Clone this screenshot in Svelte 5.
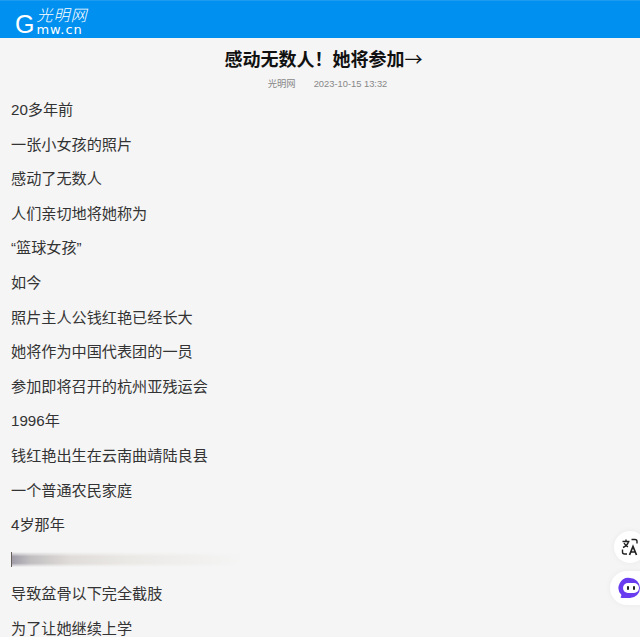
<script lang="ts">
  const lines = [
    "20多年前",
    "一张小女孩的照片",
    "感动了无数人",
    "人们亲切地将她称为",
    "“篮球女孩”",
    "如今",
    "照片主人公钱红艳已经长大",
    "她将作为中国代表团的一员",
    "参加即将召开的杭州亚残运会",
    "1996年",
    "钱红艳出生在云南曲靖陆良县",
    "一个普通农民家庭",
    "4岁那年",
  ];
  const after = ["导致盆骨以下完全截肢", "为了让她继续上学"];
</script>

<div class="page">
  <header class="topbar">
    <div class="logo" aria-label="光明网 gmw.cn">
      <span class="logo-g">G</span>
      <div class="logo-stack">
        <span class="logo-cn">光明网</span>
        <span class="logo-en">mw.cn</span>
      </div>
    </div>
  </header>

  <h1 class="title">感动无数人&#xFF01;她将参加<span class="arrow">→</span></h1>
  <div class="meta">
    <span>光明网</span>
    <span>2023-10-15 13:32</span>
  </div>

  <article class="content">
    {#each lines as line}
      <p>{line}</p>
    {/each}
    <div class="blurred"></div>
    {#each after as line}
      <p>{line}</p>
    {/each}
  </article>

  <button class="float translate" type="button" aria-label="翻译">
    <svg width="18" height="18" viewBox="0 0 18 18" fill="none" stroke="#222" stroke-width="1.4">
      <path d="M1.5 3.500h7M5 1.500v2M7.500 3.500c-.6 2.600-2.400 4.600-5.500 6M3 5c.9 1.700 2.300 3 4 3.800" />
      <path d="M10.500 1.500h3.500a2 2 0 0 1 2 2v2M1.500 11.500v2.500a2 2 0 0 0 2 2h2.500" />
      <path d="M8.500 17l3.500-8.500 3.500 8.500M9.700 14h4.600" stroke-width="1.700" />
    </svg>
  </button>
  <button class="float assistant" type="button" aria-label="助手">
    <svg width="24" height="24" viewBox="0 0 24 24">
      <path d="M12 2a10 10 0 0 1 10 10 10 10 0 0 1-10 10H4l-1.500-.5L3.500 19A10 10 0 0 1 12 2z" fill="#6a3cf0" />
      <rect x="5" y="7" width="16" height="10" rx="5" fill="#fff" />
      <rect x="9" y="10" width="2" height="4" rx="1" fill="#222" />
      <rect x="15" y="10" width="2" height="4" rx="1" fill="#222" />
    </svg>
  </button>
</div>

<style>
  :global(html),
  :global(body) {
    margin: 0;
    background: #f5f5f5;
    overflow: hidden;
  }
  .page {
    position: relative;
    height: 637px;
    overflow: hidden;
    background: #f5f5f5;
    font-family: "Liberation Sans", "Noto Sans CJK SC", sans-serif;
    color: #333;
  }
  .topbar {
    height: 37px;
    margin-top: 1px;
    background: #0090f0;
    display: flex;
    align-items: flex-end;
    padding-left: 15px;
    box-sizing: border-box;
    box-shadow: 0 -1px 0 #1c9bf0;
  }
  .logo {
    display: flex;
    align-items: flex-end;
    color: #fff;
  }
  .logo-g {
    font-size: 25px;
    line-height: 26px;
    margin-right: 2px;
    margin-bottom: 1px;
  }
  .logo-stack {
    display: flex;
    flex-direction: column;
    margin-bottom: 3px;
  }
  .logo-cn {
    font-family: "Noto Sans CJK SC", sans-serif;
    font-size: 16px;
    line-height: 15px;
    font-style: italic;
    font-weight: 300;
    letter-spacing: 1px;
    white-space: nowrap;
  }
  .logo-en {
    font-family: "DejaVu Sans", sans-serif;
    font-size: 13px;
    line-height: 10px;
    letter-spacing: 0.9px;
    margin-top: 3px;
  }
  .title {
    margin: 0;
    padding: 9px 0 0 7px;
    text-align: center;
    font-size: 18px;
    line-height: 26px;
    font-weight: 700;
    color: #111;
  }
  .arrow {
    font-family: "Noto Sans CJK SC", sans-serif;
    font-weight: 400;
    line-height: 0;
  }
  .meta {
    display: flex;
    justify-content: center;
    gap: 18px;
    margin-top: 4px;
    padding-left: 15px;
    font-size: 9.330px;
    line-height: 14px;
    color: #888;
  }
  .content {
    padding: 0 11px;
    margin-top: 8px;
  }
  .content p {
    margin: 0 0 12px;
    font-size: 15.150px;
    line-height: 22.600px;
    white-space: nowrap;
  }
  .blurred {
    width: 234px;
    height: 15px;
    margin: 15.500px 0 16px;
    background:
      linear-gradient(180deg, #f5f5f5 0, rgba(245, 245, 245, 0) 30%, rgba(245, 245, 245, 0) 75%, #f5f5f5 100%),
      linear-gradient(90deg, #a09ca8 0, #c2bfc1 8%, #dfdcd9 25%, #ebe9e6 50%, #f5f5f5 100%);
    border-left: 1px solid #665f5c;
    box-sizing: border-box;
  }
  .float {
    position: absolute;
    background: #fff;
    border: none;
    padding: 0;
    display: flex;
    align-items: center;
    box-shadow: 0 0 6px rgba(0, 0, 0, 0.05);
  }
  .translate {
    left: 614px;
    top: 531px;
    width: 32px;
    height: 32px;
    border-radius: 50%;
    padding-left: 7px;
  }
  .assistant {
    left: 610px;
    top: 571px;
    width: 44px;
    height: 34px;
    border-radius: 17px;
    padding-left: 8px;
  }
</style>
